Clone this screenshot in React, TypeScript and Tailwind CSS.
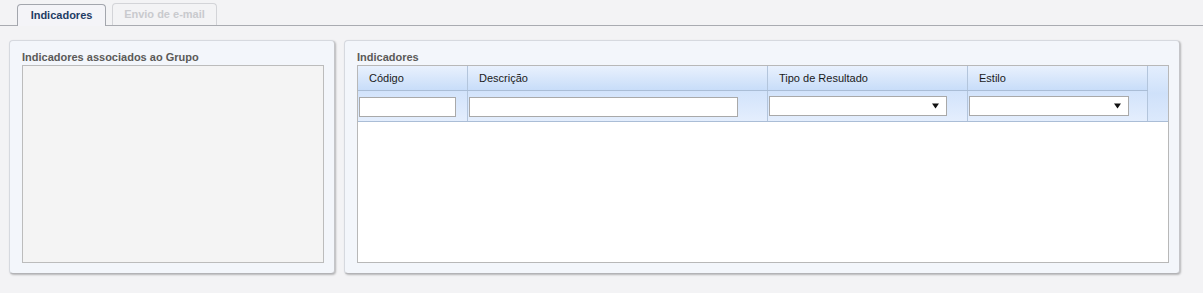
import React from "react";

function Arrow() {
  return (
    <svg width="7" height="6" viewBox="0 0 7 6" className="block">
      <path d="M0 0.5 H7 L3.5 5.5 Z" fill="#111" />
    </svg>
  );
}

function SelectBox({ w }: { w: string }) {
  return (
    <div className={`${w} h-[20px] bg-white border border-[#a9a9a9] flex items-center justify-end pr-[7px]`}>
      <Arrow />
    </div>
  );
}

export default function App() {
  return (
    <div className="w-[1203px] h-[293px] bg-[#f3f3f5] font-['Liberation_Sans',Arial,sans-serif] overflow-hidden">
      {/* Tabs */}
      <div className="h-[26px] border-b border-[#a9abb1] flex items-end pl-[17px] gap-[6px]">
        <div className="w-[89px] h-[22px] -mb-px border border-b-0 border-[#a3a6ad] rounded-t-[4px] bg-[#f4f4f8] flex items-center justify-center text-[11px] font-bold text-[#1e3c64]">
          Indicadores
        </div>
        <div className="w-[105px] h-[22px] border border-b-0 border-[#d3d4d8] rounded-t-[4px] bg-[#f3f3f5] flex items-center justify-center text-[11px] font-bold text-[#c9cace]">
          Envio de e-mail
        </div>
      </div>

      {/* Panels */}
      <div className="flex pt-[14px] pl-[9px] gap-[9px]">
        {/* Left panel */}
        <div className="w-[326px] h-[234px] rounded-[4px] border border-[#d6d9df] border-b-[#b3b3b6] border-r-[#c4c5c9] bg-[#f3f6fb] shadow-[1px_1px_2px_rgba(0,0,0,0.25)] pl-[12px] pr-[10px] flex flex-col">
          <div className="pt-[8px] h-[24px] leading-[16px] text-[11px] font-bold text-[#5b5a58]">
            Indicadores associados ao Grupo
          </div>
          <div className="h-[198px] border border-[#bcbcbc] bg-[#f4f4f4]" />
        </div>

        {/* Right panel */}
        <div className="w-[836px] h-[234px] rounded-[4px] border border-[#d6d9df] border-b-[#b3b3b6] border-r-[#c4c5c9] bg-[#f3f6fb] shadow-[1px_1px_2px_rgba(0,0,0,0.25)] pl-[12px] pr-[10px] flex flex-col">
          <div className="pt-[8px] h-[24px] leading-[16px] text-[11px] font-bold text-[#5b5a58]">
            Indicadores
          </div>
          <div className="h-[198px] border border-[#b8b8b8] bg-white flex flex-col">
            <div className="flex">
              <div className="w-[790px]">
                {/* Header row */}
                <div className="grid grid-cols-[110px_300px_200px_180px] h-[25px] border-b border-[#aabdd6] bg-gradient-to-b from-[#e9f1fd] to-[#c8ddf9] text-[11px] text-[#1a1a1a]">
                  <div className="border-r border-[#b3c5dc] pl-[11px] flex items-center">Código</div>
                  <div className="border-r border-[#b3c5dc] pl-[11px] flex items-center">Descrição</div>
                  <div className="border-r border-[#b3c5dc] pl-[11px] flex items-center">Tipo de Resultado</div>
                  <div className="border-r border-[#b3c5dc] pl-[11px] flex items-center">Estilo</div>
                </div>
                {/* Filter row */}
                <div className="grid grid-cols-[110px_300px_200px_180px] h-[31px] border-b border-[#aabdd6] bg-gradient-to-b from-[#d2e3fb] to-[#e4eefd]">
                  <div className="border-r border-[#b3c5dc] pl-[1px] pt-[6px]">
                    <div className="w-[97px] h-[20px] bg-white border border-[#a9a9a9]" />
                  </div>
                  <div className="border-r border-[#b3c5dc] pl-[1px] pt-[6px]">
                    <div className="w-[269px] h-[20px] bg-white border border-[#a9a9a9]" />
                  </div>
                  <div className="border-r border-[#b3c5dc] pl-[1px] pt-[5px]">
                    <SelectBox w="w-[178px]" />
                  </div>
                  <div className="border-r border-[#b3c5dc] pl-[1px] pt-[5px]">
                    <SelectBox w="w-[160px]" />
                  </div>
                </div>
              </div>
              <div className="flex-1 h-[56px] border-b border-[#aabdd6] bg-gradient-to-b from-[#e3eefd] via-[#cfe1fa] to-[#dce9fc]" />
            </div>
          </div>
        </div>
      </div>
    </div>
  );
}
